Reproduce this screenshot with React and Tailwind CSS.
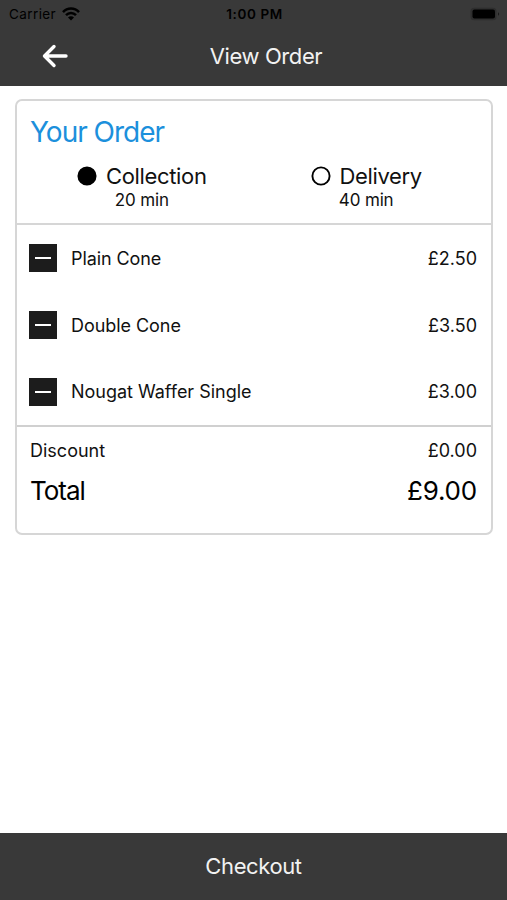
import React from 'react';

const items = [
  { name: 'Plain Cone', price: '£2.50', tracking: 'tracking-[-0.1px]' },
  { name: 'Double Cone', price: '£3.50', tracking: 'tracking-[-0.05px]' },
  { name: 'Nougat Waffer Single', price: '£3.00', tracking: 'tracking-[-0.02px]' },
];

function StatusBar() {
  return (
    <div className="relative flex h-[27px] items-center justify-between pl-[9px] pr-[7px] text-[13.5px] text-black">
      <div className="flex items-center gap-[6px]">
        <span className="pt-px tracking-[0.4px]">Carrier</span>
        <svg width="18" height="14" viewBox="0 0 18 14" fill="none" stroke="currentColor" strokeWidth="2.5">
          <path d="M1 5.2C5.4 0.4 12.6 0.4 17 5.2" />
          <path d="M4 8.2C6.8 5.2 11.2 5.2 14 8.2" />
          <path d="M9 13.6L6 10.5C7.6 8.9 10.4 8.9 12 10.5Z" fill="currentColor" stroke="none" />
        </svg>
      </div>
      <span className="absolute inset-x-0 pl-[2px] pt-px text-center text-[13.5px] font-semibold tracking-[0.6px]">1:00 PM</span>
      <svg width="30" height="14" viewBox="0 0 30 14">
        <rect x="0.5" y="0.7" width="26" height="12.6" rx="3.5" fill="#2e2e2e" />
        <rect x="2.5" y="2.5" width="22.5" height="9" rx="2" fill="#000" />
        <path d="M28 5.2a2 2 0 0 1 0 3.6z" fill="#1c1c1c" />
      </svg>
    </div>
  );
}

function Option({ label, time, selected }) {
  return (
    <div className="flex flex-col items-center">
      <div className="flex h-[26px] items-center gap-[9px]">
        <svg width="20" height="20" viewBox="0 0 20 20">
          <circle cx="10" cy="10" r="8.6" fill={selected ? '#000' : 'none'} stroke="#000" strokeWidth="1.9" />
        </svg>
        <span className="pt-px text-[22px] tracking-[-0.35px]">{label}</span>
      </div>
      <span className="text-[17px] leading-[22px] tracking-[-0.15px]">{time}</span>
    </div>
  );
}

function OrderCard() {
  return (
    <section className="ml-[15px] mr-[14px] mt-[13px] h-[436px] rounded-[7px] border-2 border-[#d6d6d6] text-[#111]">
      <div className="h-[124px] border-b-2 border-[#d6d6d6] pt-[13px]">
        <h2 className="pl-[13px] text-[28px] leading-[36px] tracking-[-1px] text-[#1c90dc]">Your Order</h2>
        <div className="mt-[13px] flex">
          <div className="pl-[60px]">
            <Option label="Collection" time="20 min" selected />
          </div>
          <div className="pl-[104px]">
            <Option label="Delivery" time="40 min" />
          </div>
        </div>
      </div>

      <ul className="flex h-[200px] flex-col">
        {items.map((item) => (
          <li key={item.name} className="flex flex-1 items-center pl-[12px] pr-[14px] text-[18px]">
            <button className="flex h-[28px] w-[28px] items-center justify-center bg-[#1c1c1c]">
              <span className="h-[2px] w-[16px] bg-white" />
            </button>
            <span className={`ml-[14px] ${item.tracking}`}>{item.name}</span>
            <span className="ml-auto">{item.price}</span>
          </li>
        ))}
      </ul>

      <div className="border-t-2 border-[#d0d0d0] pl-[13px] pr-[14px] pt-[10px]">
        <div className="flex h-[26px] items-center justify-between text-[18px]">
          <span>Discount</span>
          <span>£0.00</span>
        </div>
        <div className="mt-[9px] flex h-[36px] items-center justify-between text-[26px] text-black">
          <span className="tracking-[-1px]">Total</span>
          <span className="tracking-[-0.2px]">£9.00</span>
        </div>
      </div>
    </section>
  );
}

function App() {
  return (
    <div className="flex h-[900px] flex-col overflow-hidden bg-white font-[Inter,sans-serif]">
      <header className="h-[86px] bg-[#393939]">
        <StatusBar />
        <div className="relative flex h-[58px] items-center justify-center">
          <button className="absolute left-[41px]">
            <svg width="28" height="26" viewBox="0 0 28 26" fill="none" stroke="#fff" strokeWidth="3.4" strokeLinecap="round" strokeLinejoin="round">
              <path d="M25 13H4M13 3.5L3.5 13L13 22.5" />
            </svg>
          </button>
          <h1 className="ml-[25px] text-[22px] tracking-[-0.4px] text-[#f2f2f2]">View Order</h1>
        </div>
      </header>

      <main className="flex-1">
        <OrderCard />
      </main>

      <button className="h-[67px] shrink-0 bg-[#393939] text-[22px] tracking-[-0.4px] text-[#f2f2f2]">Checkout</button>
    </div>
  );
}

export default App;
